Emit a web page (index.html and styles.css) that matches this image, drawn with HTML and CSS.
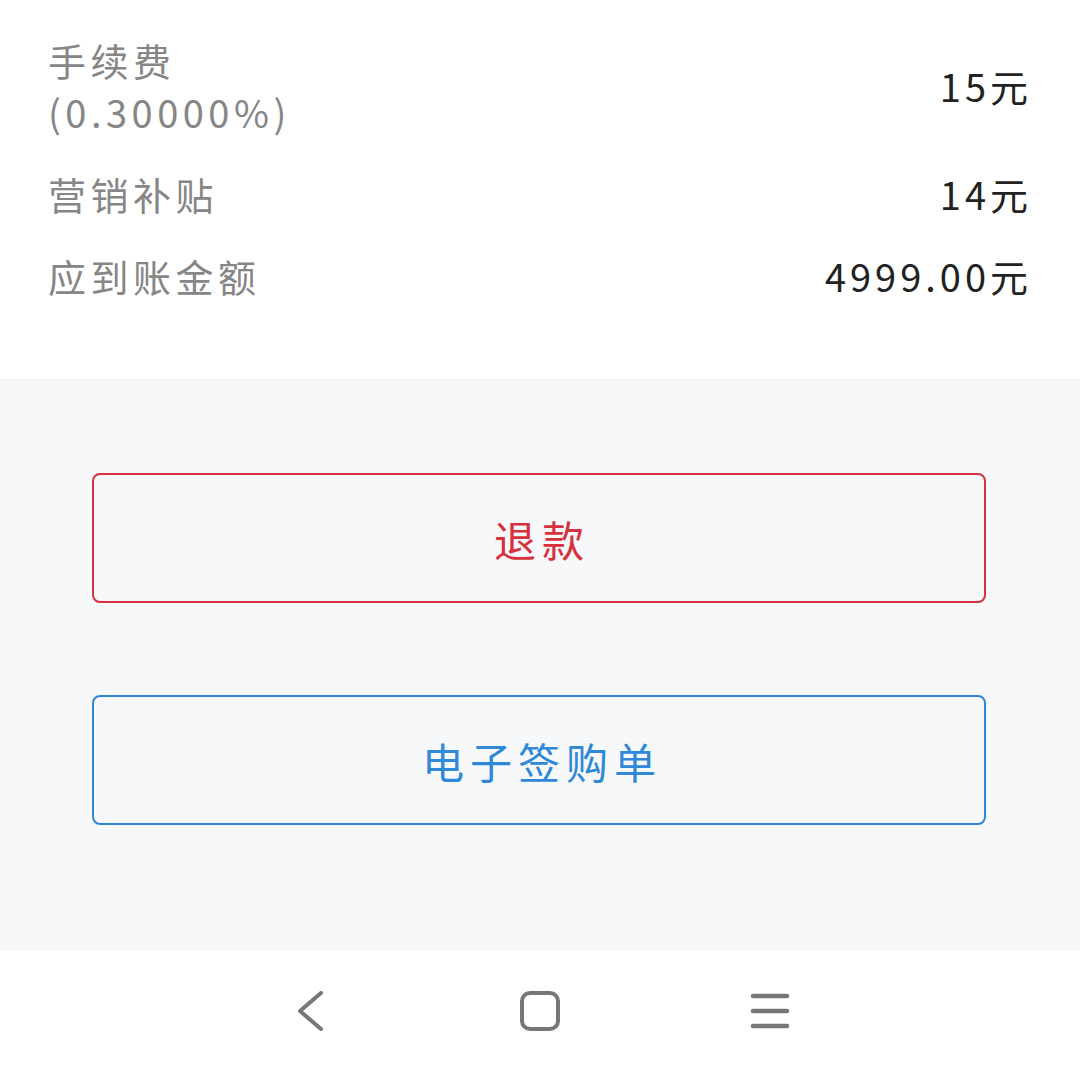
FILE: index.html
```html
<!DOCTYPE html>
<html lang="zh-CN">
<head>
    <meta charset="UTF-8">
    <meta name="viewport" content="width=device-width, initial-scale=1.0">
    <title>交易详情</title>
    <link rel="stylesheet" href="styles.css">
</head>
<body>
    <div class="page">
        <section class="detail">
            <div class="row">
                <span class="label">手续费<br>(0.30000%)</span>
                <span class="value">15元</span>
            </div>
            <div class="row">
                <span class="label">营销补贴</span>
                <span class="value">14元</span>
            </div>
            <div class="row">
                <span class="label">应到账金额</span>
                <span class="value">4999.00元</span>
            </div>
        </section>

        <section class="actions">
            <button type="button" class="btn btn-refund">退款</button>
            <button type="button" class="btn btn-receipt">电子签购单</button>
        </section>

        <nav class="navbar">
            <svg class="nav-icon" viewBox="0 0 40 40" aria-label="返回">
                <polyline points="31,2 10,20 31,38" fill="none" stroke="#777" stroke-width="4" stroke-linecap="round" stroke-linejoin="round"/>
            </svg>
            <svg class="nav-icon" viewBox="0 0 40 40" aria-label="主页">
                <rect x="2" y="2" width="36" height="36" rx="8" fill="none" stroke="#777" stroke-width="4"/>
            </svg>
            <svg class="nav-icon" viewBox="0 0 40 40" aria-label="菜单">
                <line x1="3" y1="5" x2="37" y2="5" stroke="#777" stroke-width="4.5" stroke-linecap="round"/>
                <line x1="3" y1="20" x2="37" y2="20" stroke="#777" stroke-width="4.5" stroke-linecap="round"/>
                <line x1="3" y1="35" x2="37" y2="35" stroke="#777" stroke-width="4.5" stroke-linecap="round"/>
            </svg>
        </nav>
    </div>
</body>
</html>
```

FILE: styles.css
```css
:root {
    --label: #868686;
    --text: #222;
    --bg-gray: #f7f8fa;
    --red: #d8303c;
    --blue: #2f88d8;
}

* {
    margin: 0;
    padding: 0;
    box-sizing: border-box;
    font-family: "Noto Sans CJK SC", "Noto Sans", sans-serif;
}

body {
    background-color: white;
}

.page {
    height: 1076px;
    display: flex;
    flex-direction: column;
}

.detail {
    background-color: white;
    padding: 19px 52px 62px 48px;
    border-bottom: 1px solid #eeeff1;
}

.row {
    display: flex;
    justify-content: space-between;
    align-items: center;
    padding: 15px 0;
}

.label {
    color: var(--label);
    font-size: 38px;
    line-height: 52px;
    letter-spacing: 4.5px;
}

.value {
    color: var(--text);
    font-size: 38px;
    line-height: 52px;
    letter-spacing: 4px;
    margin-right: -4px;
}

.actions {
    flex: 1;
    background-color: var(--bg-gray);
    padding: 93px 94px 0 92px;
    display: flex;
    flex-direction: column;
    gap: 92px;
}

.btn {
    height: 130px;
    background-color: transparent;
    border: 2px solid;
    border-radius: 8px;
    font-size: 42px;
    letter-spacing: 6px;
    padding-left: 6px;
    cursor: pointer;
}

.btn-refund {
    color: var(--red);
    border-color: var(--red);
}

.btn-receipt {
    color: var(--blue);
    border-color: var(--blue);
}

.navbar {
    height: 125px;
    background-color: white;
    display: flex;
    justify-content: center;
    align-items: center;
    gap: 190px;
    padding-bottom: 6px;
}

.nav-icon {
    width: 40px;
    height: 40px;
}
```
